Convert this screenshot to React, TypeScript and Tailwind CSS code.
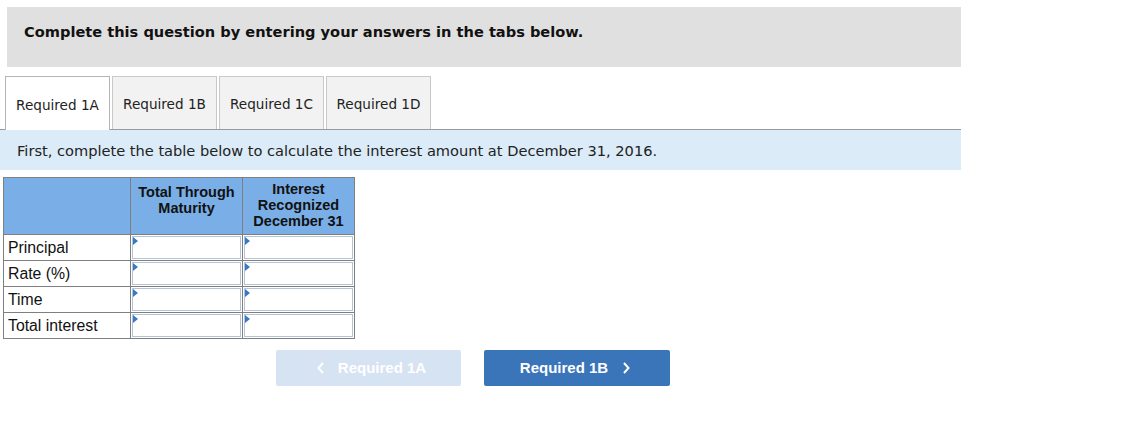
import React from 'react'

const rows = ['Principal', 'Rate (%)', 'Time', 'Total interest']
const tabs = ['Required 1A', 'Required 1B', 'Required 1C', 'Required 1D']

function InputCell() {
  return (
    <td className="border border-[#7f7f7f] p-px">
      <div className="relative h-[23px] w-full border border-[#b3c3d8] bg-white">
        <span className="absolute left-0 top-0 w-0 h-0 border-t-[4px] border-b-[4px] border-l-[5px] border-t-transparent border-b-transparent border-l-[#3b78c4]" />
      </div>
    </td>
  )
}

export default function App() {
  return (
    <div className="w-[1122px] h-[436px] bg-white pt-[7px] text-[#111]">
      <div className="ml-[7px] w-[954px] h-[60px] bg-[#e0e0e0] pl-[17px] pt-[14px]">
        <p className="font-['DejaVu_Sans',sans-serif] font-bold text-[14.6px] leading-[22px]">
          Complete this question by entering your answers in the tabs below.
        </p>
      </div>

      <div className="mt-[9px] w-[961px] flex items-end gap-[2px] pl-[5px] border-b border-[#9a9a9a] h-[54px]">
        {tabs.map((t, i) => (
          <div
            key={t}
            className={
              i === 0
                ? 'h-[54px] w-[105px] -mb-px bg-white border border-b-0 border-[#b5b5b5] flex items-center justify-center pt-[4px]'
                : 'h-[53px] w-[105px] bg-[#f2f2f2] border border-b-0 border-[#c9c9c9] flex items-center justify-center pt-[3px]'
            }
          >
            <span className="font-['DejaVu_Sans',sans-serif] text-[13.6px] text-[#222]">{t}</span>
          </div>
        ))}
      </div>

      <div className="w-[961px] h-[40px] bg-[#dbebf8] flex items-center pl-[17px] pt-[2px]">
        <p className="font-['DejaVu_Sans',sans-serif] text-[14.6px] text-[#222]">
          First, complete the table below to calculate the interest amount at December 31, 2016.
        </p>
      </div>

      <table className="mt-[7px] ml-[3px] border-collapse font-['Liberation_Sans',Arial,sans-serif] text-[#111]">
        <thead>
          <tr className="h-[57px] bg-[#7aaee6] text-[14.5px]">
            <th className="w-[127px] border border-[#7f7f7f]" />
            <th className="w-[112px] border border-[#7f7f7f] font-bold leading-[16px] pb-[12px]">
              Total Through
              <br />
              Maturity
            </th>
            <th className="w-[112px] border border-[#7f7f7f] font-bold leading-[16px] pb-[2px]">
              Interest
              <br />
              Recognized
              <br />
              December 31
            </th>
          </tr>
        </thead>
        <tbody>
          {rows.map((r) => (
            <tr key={r}>
              <td className="border border-[#7f7f7f] px-[4px] text-left text-[15.8px] leading-[18px] pt-[1px]">{r}</td>
              <InputCell />
              <InputCell />
            </tr>
          ))}
        </tbody>
      </table>

      <div className="mt-[11px] ml-[276px] flex gap-[23px] font-['Liberation_Sans',Arial,sans-serif] font-bold text-[15px] text-white">
        <button className="w-[185px] h-[36px] rounded-[2px] bg-[#d6e3f2] flex items-center justify-center gap-[13px] pl-[6px]">
          <svg width="8" height="12" viewBox="0 0 8 12" fill="none" stroke="white" strokeWidth="2">
            <path d="M6 1 L1.5 6 L6 11" />
          </svg>
          <span>Required 1A</span>
        </button>
        <button className="w-[186px] h-[36px] rounded-[2px] bg-[#3a75b9] flex items-center justify-center gap-[14px] pr-[4px]">
          <span>Required 1B</span>
          <svg width="8" height="12" viewBox="0 0 8 12" fill="none" stroke="white" strokeWidth="2">
            <path d="M2 1 L6.5 6 L2 11" />
          </svg>
        </button>
      </div>
    </div>
  )
}
